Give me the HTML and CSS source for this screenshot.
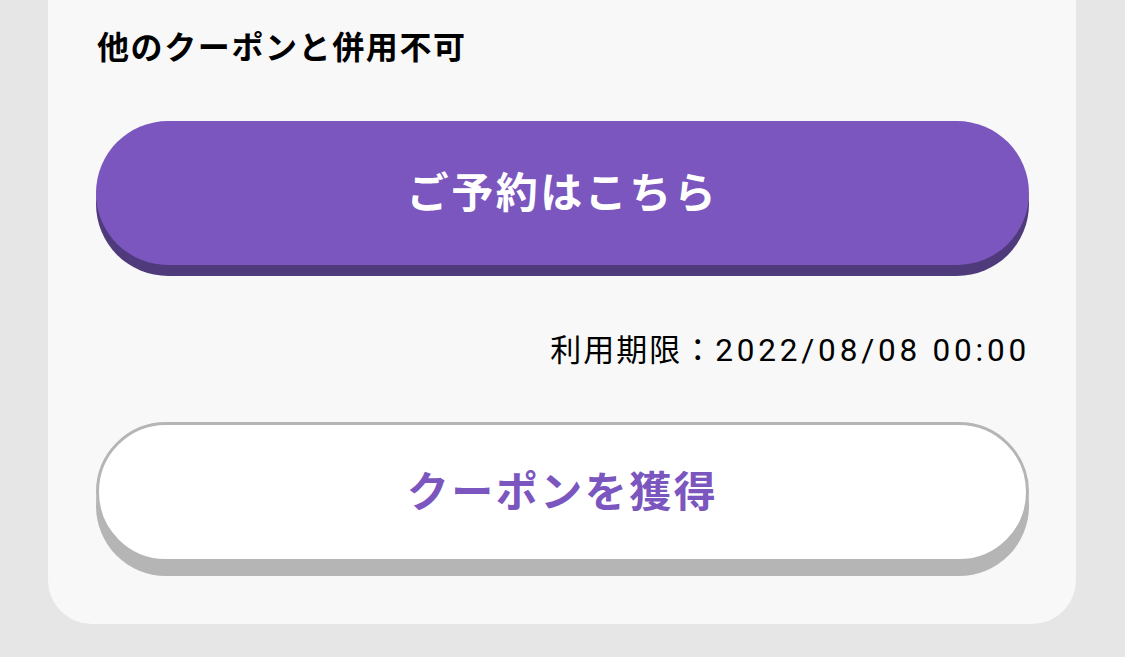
FILE: index.html
```html
<!DOCTYPE html>
<html lang="ja">
<head>
<meta charset="utf-8">
<link rel="stylesheet" href="styles.css">
</head>
<body>
<div class="card">
  <p class="note">他のクーポンと併用不可</p>
  <button class="btn btn-primary">ご予約はこちら</button>
  <p class="expiry"><span class="expiry-label">利用期限：</span><span class="expiry-date">2022/08/08 00:00</span></p>
  <button class="btn btn-secondary">クーポンを獲得</button>
</div>
</body>
</html>
```
FILE: styles.css
```css
html, body {
  margin: 0;
  padding: 0;
}
body {
  background: #e6e6e6;
  width: 1125px;
  height: 657px;
  overflow: hidden;
  font-family: "Noto Sans CJK JP", "Noto Sans", sans-serif;
}
.card {
  margin-left: 48px;
  width: 1028px;
  box-sizing: border-box;
  padding: 23px 47px 62px 48px;
  background: #f8f8f8;
  border-radius: 0 0 44px 44px;
  display: flex;
  flex-direction: column;
}
.note {
  margin: 0;
  font-size: 32px;
  line-height: 45px;
  font-weight: 700;
  color: #000;
  letter-spacing: 1.6px;
  padding-left: 1px;
}
.btn {
  display: flex;
  align-items: center;
  justify-content: center;
  width: 100%;
  border-radius: 72px;
  font-family: inherit;
  font-size: 42px;
  font-weight: 700;
  letter-spacing: 2.5px;
  cursor: pointer;
  padding: 0 0 8px;
}
.btn-primary {
  margin-top: 53px;
  height: 144px;
  background: #7b56be;
  color: #fff;
  border: none;
  box-shadow: 0 11px 0 #4f3b7c;
}
.expiry {
  margin: 60px 0 0;
  height: 45px;
  display: flex;
  justify-content: flex-end;
  align-items: baseline;
  font-size: 31px;
  line-height: 45px;
  color: #000;
}
.expiry-label {
  font-family: "Noto Sans CJK JP", sans-serif;
  letter-spacing: 2px;
}
.expiry-date {
  font-family: "Roboto", "Noto Sans", sans-serif;
  font-size: 31.5px;
  letter-spacing: 3.8px;
  margin-right: -1px;
}
.btn-secondary {
  margin-top: 52px;
  height: 140px;
  background: #fff;
  color: #7b56be;
  border: 3px solid #b5b5b5;
  box-shadow: 0 14px 0 #b5b5b5;
}
```
